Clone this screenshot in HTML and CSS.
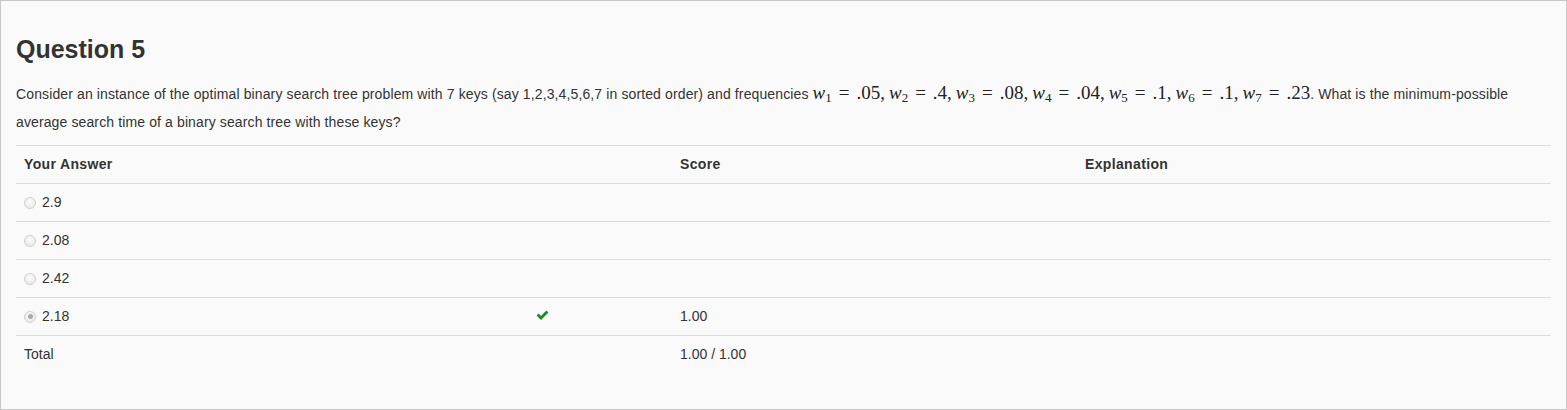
FILE: index.html
```html
<!DOCTYPE html>
<html>
<head>
<meta charset="utf-8">
<link rel="stylesheet" href="styles.css">
</head>
<body>
<div class="box">
  <h2 class="title">Question 5</h2>
  <p class="prompt">Consider an instance of the optimal binary search tree problem with 7 keys (say 1,2,3,4,5,6,7 in sorted order) and frequencies <span class="math"><i>w</i><sub>1</sub><span class="rel">=</span>.05,<span class="sp"></span><i>w</i><sub>2</sub><span class="rel">=</span>.4,<span class="sp"></span><i>w</i><sub>3</sub><span class="rel">=</span>.08,<span class="sp"></span><i>w</i><sub>4</sub><span class="rel">=</span>.04,<span class="sp"></span><i>w</i><sub>5</sub><span class="rel">=</span>.1,<span class="sp"></span><i>w</i><sub>6</sub><span class="rel">=</span>.1,<span class="sp"></span><i>w</i><sub>7</sub><span class="rel">=</span>.23</span>. What is the minimum-possible average search time of a binary search tree with these keys?</p>
  <table class="results">
    <colgroup>
      <col class="c1"><col class="c2"><col class="c3"><col class="c4">
    </colgroup>
    <thead>
      <tr><th colspan="2">Your Answer</th><th>Score</th><th>Explanation</th></tr>
    </thead>
    <tbody>
      <tr><td><span class="radio"></span>2.9</td><td></td><td></td><td></td></tr>
      <tr><td><span class="radio"></span>2.08</td><td></td><td></td><td></td></tr>
      <tr><td><span class="radio"></span>2.42</td><td></td><td></td><td></td></tr>
      <tr><td><span class="radio checked"></span>2.18</td><td class="ok"><svg width="13" height="11" viewBox="0 0 13 11"><path d="M0.6 5.6 L2.6 3.6 L5 6 L10.4 0.6 L12.4 2.6 L5 10 Z" fill="#1a8a1a"/></svg></td><td>1.00</td><td></td></tr>
      <tr><td>Total</td><td></td><td>1.00 / 1.00</td><td></td></tr>
    </tbody>
  </table>
</div>
</body>
</html>
```
FILE: styles.css
```css
html, body {
  margin: 0;
  padding: 0;
  background: #fff;
}
.box {
  box-sizing: border-box;
  width: 1567px;
  height: 410px;
  border: 1px solid #c8c8c8;
  background: #fafafa;
  padding: 15px 15px;
  font-family: "Liberation Sans", Arial, sans-serif;
  color: #333;
  font-size: 14px;
}
.title {
  margin: 20px 0 0 0;
  font-size: 25px;
  font-weight: bold;
  line-height: 26px;
  color: #333;
}
.prompt {
  margin: 17px 0 0 0;
  line-height: 28px;
  letter-spacing: 0.12px;
}
.math {
  font-family: "Liberation Serif", "Times New Roman", serif;
  font-size: 19px;
  color: #222;
  white-space: nowrap;
  letter-spacing: 0;
}
.math i {
  font-style: italic;
}
.math sub {
  font-size: 13px;
  vertical-align: -3px;
  line-height: 0;
}
.math .rel {
  margin: 0 7px;
}
.math .sp {
  display: inline-block;
  width: 4px;
}
.results {
  width: 1535px;
  border-collapse: collapse;
  table-layout: fixed;
  margin-top: 9px;
}
.c1 { width: 512px; }
.c2 { width: 144px; }
.c3 { width: 405px; }
.c4 { width: 474px; }
.results th, .results td {
  text-align: left;
  padding: 0 8px 2px 8px;
  height: 35px;
  border-top: 1px solid #dddddd;
  vertical-align: middle;
  font-size: 14px;
  color: #333;
}
.results th {
  font-weight: bold;
  letter-spacing: 0.35px;
  border-bottom: 1px solid #dddddd;
}
.results thead + tbody tr:first-child td {
  border-top: 0;
}
.results td.ok svg {
  display: block;
}
.radio {
  display: inline-block;
  box-sizing: border-box;
  width: 12px;
  height: 12px;
  border-radius: 50%;
  border: 1px solid #cfcfcf;
  background: radial-gradient(circle at 50% 35%, #fbfbfb 0%, #e6e6e6 100%);
  vertical-align: -2px;
  margin-right: 6px;
  position: relative;
}
.radio.checked::after {
  content: "";
  position: absolute;
  left: 2.5px;
  top: 2.5px;
  width: 5px;
  height: 5px;
  border-radius: 50%;
  background: #a8a8a8;
}
```
